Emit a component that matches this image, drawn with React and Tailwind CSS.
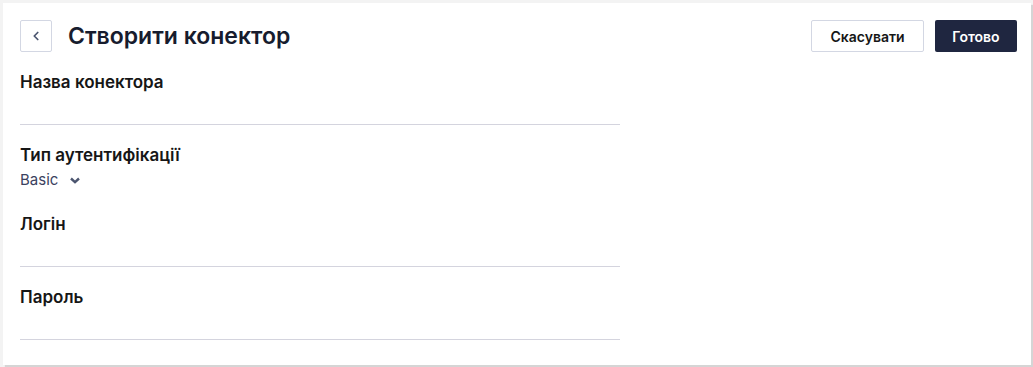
import { ChevronLeft } from 'lucide-react'

function Field({ label, children }) {
  return (
    <div className="w-[600px]">
      <div className="text-[17px] leading-6 font-semibold text-[#161616]">{label}</div>
      {children}
    </div>
  )
}

function TextInput() {
  return <div className="h-[31px] border-b border-[#d4d4de]" />
}

export default function App() {
  return (
    <div className="w-[1033px] h-[367px] bg-[#f3f3f3] pt-[3px] pl-[3px] font-['Inter',sans-serif]">
      <div className="w-[1028px] h-[362px] bg-white shadow-[2px_2px_1px_rgba(0,0,0,0.12)] pl-[17px] pr-[14px] pt-[17px]">
        <div className="flex items-center h-8">
          <button className="w-8 h-8 flex items-center justify-center border border-[#d3d7e3] rounded-[2px] text-[#4b556f]">
            <ChevronLeft className="w-3.5 h-3.5" strokeWidth={3} />
          </button>
          <h1 className="ml-4 text-[23px] font-semibold text-[#171c2e] leading-8">Створити конектор</h1>
          <div className="ml-auto flex items-center gap-[11px]">
            <button className="h-8 border border-[#d3d7e3] rounded-[2px] text-[14px] font-semibold text-[#161616] w-[113px]">
              Скасувати
            </button>
            <button className="h-8 bg-[#1f2640] rounded-[2px] text-[14px] font-semibold text-white w-[82px]">
              Готово
            </button>
          </div>
        </div>

        <div className="mt-[18px]">
          <Field label="Назва конектора">
            <TextInput />
          </Field>
        </div>

        <div className="mt-[18px]">
          <Field label="Тип аутентифікації">
            <div className="flex items-center h-5 mt-[3px] text-[15px] text-[#3b4260]">
              <span>Basic</span>
              <svg className="ml-3 w-[10px] h-[7px]" viewBox="0 0 10 7" fill="none">
                <path d="M1 1.5 L5 5.2 L9 1.5" stroke="#4b556f" strokeWidth="2.4" />
              </svg>
            </div>
          </Field>
        </div>

        <div className="mt-[22px]">
          <Field label="Логін">
            <TextInput />
          </Field>
        </div>

        <div className="mt-[18px]">
          <Field label="Пароль">
            <TextInput />
          </Field>
        </div>
      </div>
    </div>
  )
}
